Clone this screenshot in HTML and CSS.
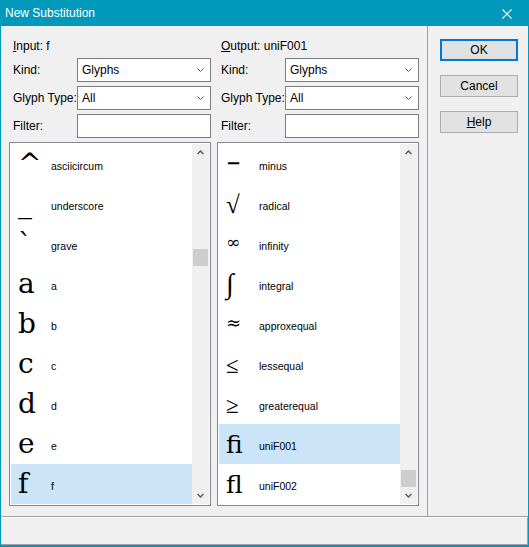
FILE: index.html
```html
<!DOCTYPE html>
<html>
<head>
<meta charset="utf-8">
<link rel="stylesheet" href="styles.css">
</head>
<body>
<div class="window">
  <div class="titlebar">
    <span class="title">New Substitution</span>
    <svg class="close" width="10" height="10" viewBox="0 0 10 10"><path d="M0.5 0.5 L9.5 9.5 M9.5 0.5 L0.5 9.5" stroke="#fff" stroke-width="1.1" fill="none"/></svg>
  </div>
  <div class="main">
    <div class="content">
      <div class="pane">
        <div class="heading"><u>I</u>nput: f</div>
        <div class="form">
          <span class="lbl">Kind:</span>
          <div class="combo"><span>Glyphs</span><svg width="7" height="4" viewBox="0 0 7 4"><polyline points="0.5,0.5 3.5,3.5 6.5,0.5" fill="none" stroke="#555" stroke-width="1"/></svg></div>
          <span class="lbl">Glyph Type:</span>
          <div class="combo"><span>All</span><svg width="7" height="4" viewBox="0 0 7 4"><polyline points="0.5,0.5 3.5,3.5 6.5,0.5" fill="none" stroke="#555" stroke-width="1"/></svg></div>
          <span class="lbl">Filter:</span>
          <div class="field"></div>
        </div>
        <div class="list">
          <div class="rows">
            <div class="row"><span class="g g-circ">^</span><span class="name">asciicircum</span></div>
            <div class="row"><span class="g">_</span><span class="name">underscore</span></div>
            <div class="row"><span class="g">`</span><span class="name">grave</span></div>
            <div class="row"><span class="g">a</span><span class="name">a</span></div>
            <div class="row"><span class="g">b</span><span class="name">b</span></div>
            <div class="row"><span class="g">c</span><span class="name">c</span></div>
            <div class="row"><span class="g">d</span><span class="name">d</span></div>
            <div class="row"><span class="g">e</span><span class="name">e</span></div>
            <div class="row sel"><span class="g">f</span><span class="name">f</span></div>
          </div>
          <div class="scrollbar">
            <div class="arrow"><svg width="7" height="5" viewBox="0 0 7 5"><polyline points="0.5,4 3.5,1 6.5,4" fill="none" stroke="#606060" stroke-width="1.5"/></svg></div>
            <div class="track"><div class="thumb thumb-left"></div></div>
            <div class="arrow"><svg width="7" height="5" viewBox="0 0 7 5"><polyline points="0.5,1 3.5,4 6.5,1" fill="none" stroke="#606060" stroke-width="1.5"/></svg></div>
          </div>
        </div>
      </div>
      <div class="pane">
        <div class="heading"><u>O</u>utput: uniF001</div>
        <div class="form">
          <span class="lbl">Kind:</span>
          <div class="combo"><span>Glyphs</span><svg width="7" height="4" viewBox="0 0 7 4"><polyline points="0.5,0.5 3.5,3.5 6.5,0.5" fill="none" stroke="#555" stroke-width="1"/></svg></div>
          <span class="lbl">Glyph Type:</span>
          <div class="combo"><span>All</span><svg width="7" height="4" viewBox="0 0 7 4"><polyline points="0.5,0.5 3.5,3.5 6.5,0.5" fill="none" stroke="#555" stroke-width="1"/></svg></div>
          <span class="lbl">Filter:</span>
          <div class="field"></div>
        </div>
        <div class="list">
          <div class="rows">
            <div class="row"><span class="g g-minus">−</span><span class="name">minus</span></div>
            <div class="row"><span class="g g-rad">√</span><span class="name">radical</span></div>
            <div class="row"><span class="g g-inf">∞</span><span class="name">infinity</span></div>
            <div class="row"><span class="g g-int">∫</span><span class="name">integral</span></div>
            <div class="row"><span class="g g-approx">≈</span><span class="name">approxequal</span></div>
            <div class="row"><span class="g g-le">≤</span><span class="name">lessequal</span></div>
            <div class="row"><span class="g g-le">≥</span><span class="name">greaterequal</span></div>
            <div class="row sel"><span class="g g-lig">ﬁ</span><span class="name">uniF001</span></div>
            <div class="row"><span class="g g-lig">ﬂ</span><span class="name">uniF002</span></div>
          </div>
          <div class="scrollbar">
            <div class="arrow"><svg width="7" height="5" viewBox="0 0 7 5"><polyline points="0.5,4 3.5,1 6.5,4" fill="none" stroke="#606060" stroke-width="1.5"/></svg></div>
            <div class="track"><div class="thumb thumb-bottom"></div></div>
            <div class="arrow"><svg width="7" height="5" viewBox="0 0 7 5"><polyline points="0.5,1 3.5,4 6.5,1" fill="none" stroke="#606060" stroke-width="1.5"/></svg></div>
          </div>
        </div>
      </div>
    </div>
    <div class="buttons">
      <button class="btn default">OK</button>
      <button class="btn">Cancel</button>
      <button class="btn"><u>H</u>elp</button>
    </div>
  </div>
  <div class="status"></div>
</div>
</body>
</html>
```

FILE: styles.css
```css
html, body {
  margin: 0;
  padding: 0;
  background: #f0f0f0;
}

.window {
  width: 529px;
  height: 547px;
  box-sizing: border-box;
  border: 1px solid #0099bc;
  border-top: 0;
  border-bottom: 2px solid #0099bc;
  background: #f0f0f0;
  display: flex;
  flex-direction: column;
  font-family: "Liberation Sans", Arial, sans-serif;
  font-size: 12px;
  color: #000;
}

.titlebar {
  height: 26px;
  flex: none;
  background: #0099bc;
  color: #fff;
  display: flex;
  align-items: center;
  justify-content: space-between;
  padding: 0 16px 0 4px;
  line-height: 26px;
}

.title {
  font-size: 12px;
}

.close {
  display: block;
  margin-top: 1px;
}

.main {
  height: 490px;
  flex: none;
  display: flex;
  border-bottom: 1px solid #a0a0a0;
}

.content {
  width: 410px;
  padding: 12px 8px 0 8px;
  border-right: 1px solid #a0a0a0;
  display: flex;
  gap: 6px;
}

.pane {
  width: 202px;
  display: flex;
  flex-direction: column;
}

.heading {
  height: 16px;
  line-height: 16px;
  padding-left: 4px;
  margin-bottom: 4px;
}

.form {
  display: grid;
  grid-template-columns: 68px 134px;
  grid-auto-rows: 24px;
  row-gap: 4px;
  align-items: center;
}

.lbl {
  padding-left: 4px;
  white-space: nowrap;
}

.combo, .field {
  height: 24px;
  box-sizing: border-box;
  border: 1px solid #7a7a7a;
  background: #fff;
}

.combo {
  display: flex;
  align-items: center;
  justify-content: space-between;
  padding: 0 6px 0 4px;
}

.combo svg {
  display: block;
}

.list {
  margin-top: 4px;
  height: 364px;
  box-sizing: border-box;
  border: 1px solid #828790;
  background: #fff;
  padding: 1px;
  display: flex;
}

.rows {
  width: 181px;
  overflow: hidden;
}

.row {
  height: 40px;
  line-height: 40px;
  padding-left: 7px;
  font-family: "DejaVu Serif", serif;
  font-size: 28px;
  white-space: nowrap;
  overflow: hidden;
}

.row.sel {
  background: #cce4f7;
}

.g {
  display: inline-block;
  width: 33px;
  line-height: 1;
}

.name {
  font-family: "Liberation Sans", Arial, sans-serif;
  font-size: 10.5px;
  line-height: 1;
  vertical-align: 3px;
}

.g-minus {
  font-size: 18px;
  font-weight: bold;
  vertical-align: 4px;
}

.g-rad {
  font-family: "Liberation Serif", serif;
  font-size: 25px;
}

.g-inf {
  font-size: 17px;
  vertical-align: 5px;
}

.g-int {
  font-family: "Liberation Serif", serif;
  font-size: 28px;
}

.g-approx {
  font-size: 18px;
  vertical-align: 4px;
}

.g-le {
  font-family: "Liberation Serif", serif;
  font-size: 23px;
}

.g-lig {
  font-size: 25px;
}

.scrollbar {
  width: 17px;
  background: #f0f0f0;
  display: flex;
  flex-direction: column;
}

.arrow {
  height: 17px;
  display: flex;
  align-items: center;
  justify-content: center;
}

.arrow svg {
  display: block;
}

.track {
  flex: 1;
  display: flex;
  flex-direction: column;
}

.thumb {
  height: 17px;
  margin: 0 1px;
  background: #cdcdcd;
}

.thumb-left {
  margin-top: 88px;
}

.thumb-bottom {
  margin-top: auto;
}

.buttons {
  flex: 1;
  padding: 13px 0 0 12px;
  display: flex;
  flex-direction: column;
  gap: 14px;
}

.btn {
  width: 78px;
  height: 22px;
  box-sizing: border-box;
  border: 1px solid #adadad;
  background: #e1e1e1;
  font-family: "Liberation Sans", Arial, sans-serif;
  font-size: 12px;
  color: #000;
  padding: 0;
  margin: 0;
}

.btn.default {
  border: 2px solid #0078d7;
}

.status {
  flex: 1;
  border-top: 1px solid #fff;
  border-right: 1px solid #a0a0a0;
  border-bottom: 1px solid #a0a0a0;
}
```
